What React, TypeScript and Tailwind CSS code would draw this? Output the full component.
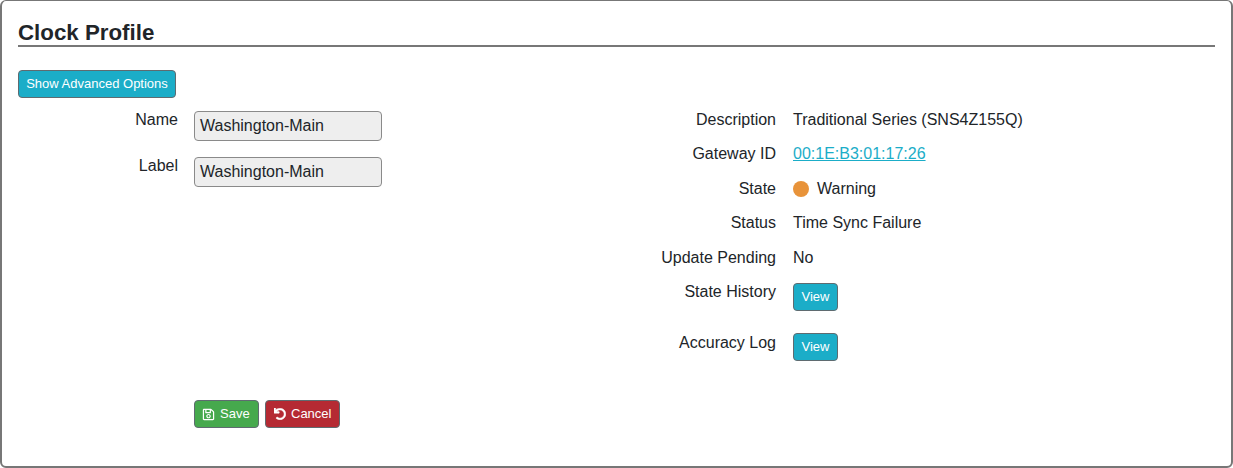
import { FaRegSave, FaUndo } from "react-icons/fa";

const btnInfo =
  "rounded-[4px] border border-[#5f6b70] bg-[#1badc8] text-[13px] leading-[26px] text-white h-[28px]";

function Row({ label, children }: { label: string; children: React.ReactNode }) {
  return (
    <div className="flex h-[34.5px] items-center">
      <div className="w-[160px] text-right">{label}</div>
      <div className="ml-[17px] flex items-center">{children}</div>
    </div>
  );
}

function ButtonRow({ label, className, labelClass }: { label: string; className: string; labelClass: string }) {
  return (
    <div className={`flex items-start ${className}`}>
      <div className={`w-[160px] text-right ${labelClass}`}>{label}</div>
      <button className={`ml-[17px] w-[45px] ${btnInfo}`}>View</button>
    </div>
  );
}

export default function App() {
  return (
    <div className="h-[468px] w-[1233px] rounded-[6px] border-x-2 border-b-2 border-t border-[#777777] bg-white px-[16px] pt-[17px] font-['Liberation_Sans',Arial,sans-serif] text-base text-[#212529]">
      {/* Heading */}
      <h2 className="box-content h-[27px] border-b-2 border-[#777777] text-[22.3px] font-bold leading-[29px]">
        Clock Profile
      </h2>

      <button className={`mt-[23px] block w-[158px] ${btnInfo}`}>Show Advanced Options</button>

      <div className="mt-[13px] flex">
        {/* Left column */}
        <div className="w-[598px]">
          <div className="flex items-start">
            <label className="-mt-[3px] w-[160px] text-right">Name</label>
            <div className="ml-[16px] h-[30px] w-[188px] rounded-[4px] border border-[#8a8a8a] bg-[#eeeeee] pl-[5px] leading-[28px]">
              Washington-Main
            </div>
          </div>
          <div className="mt-[16px] flex items-start">
            <label className="-mt-[3px] w-[160px] text-right">Label</label>
            <div className="ml-[16px] h-[30px] w-[188px] rounded-[4px] border border-[#8a8a8a] bg-[#eeeeee] pl-[5px] leading-[28px]">
              Washington-Main
            </div>
          </div>
          <div className="ml-[176px] mt-[213px] flex gap-[6px]">
            <button className="flex h-[28px] w-[65px] items-center gap-[5px] rounded-[4px] border border-[#5f6b70] bg-[#46a94d] pl-[7px] text-[13px] text-white">
              <FaRegSave className="size-[13px]" />
              Save
            </button>
            <button className="flex h-[28px] w-[75px] items-center gap-[5px] rounded-[4px] border border-[#5f6b70] bg-[#b52a33] pl-[8px] text-[13px] text-white">
              <FaUndo className="size-[12px] stroke-[20]" />
              Cancel
            </button>
          </div>
        </div>

        {/* Right column */}
        <div className="-mt-[8.5px]">
          <Row label="Description">Traditional Series (SNS4Z155Q)</Row>
          <Row label="Gateway ID">
            <a href="#" className="text-[#1badc8] underline">
              00:1E:B3:01:17:26
            </a>
          </Row>
          <Row label="State">
            <span className="mr-[8px] size-[16px] rounded-full bg-[#e8933a]" />
            Warning
          </Row>
          <Row label="Status">Time Sync Failure</Row>
          <Row label="Update Pending">No</Row>
          <ButtonRow label="State History" labelClass="-mt-[3px]" className="mt-[8px]" />
          <ButtonRow label="Accuracy Log" labelClass="-mt-[2px]" className="mt-[22px]" />
        </div>
      </div>
    </div>
  );
}
